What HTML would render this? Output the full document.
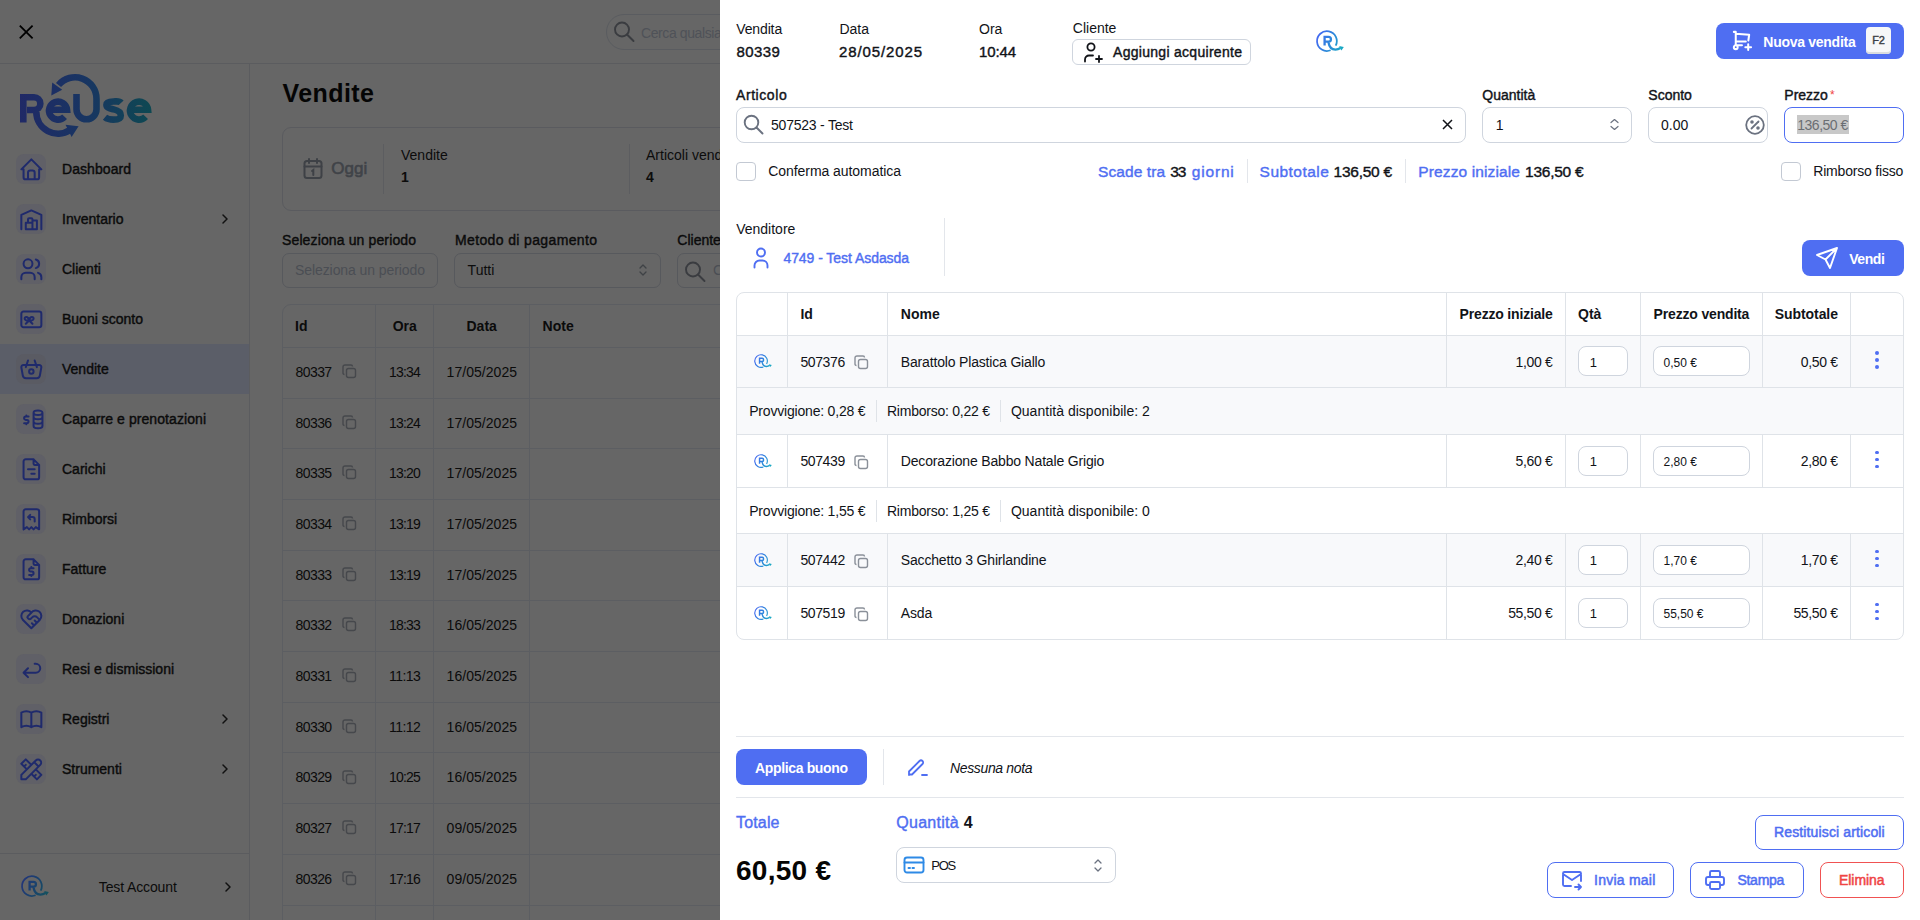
<!DOCTYPE html>
<html><head><meta charset="utf-8"><title>Vendite</title>
<style>
html,body{margin:0;padding:0;}
body{width:1920px;height:920px;overflow:hidden;position:relative;font-family:"Liberation Sans", sans-serif;background:#fff;}
.t{position:absolute;line-height:1;white-space:pre;}
svg{overflow:visible}
</style></head><body>
<div style="position:absolute;left:0px;top:0px;width:720px;height:920px;background:#666666"></div>
<div style="position:absolute;left:0px;top:63px;width:720px;height:1px;background:#5b5c5f"></div>
<div style="position:absolute;left:249px;top:64px;width:1px;height:856px;background:#5b5c5f"></div>
<div style="position:absolute;left:0px;top:853px;width:249px;height:1px;background:#5b5c5f"></div>
<svg style="position:absolute;left:18px;top:24px;" width="16" height="16" viewBox="0 0 16 16" fill="none"><path d="M1.8 1.6L14.6 14.4M14.6 1.6L1.8 14.4" stroke="#000" stroke-width="1.8" stroke-linecap="butt"/></svg>
<div style="position:absolute;left:606px;top:14px;width:200px;height:36px;border:1px solid #5a5c60;border-radius:18px;box-sizing:border-box"></div>
<svg style="position:absolute;left:613px;top:21px;" width="22" height="22" viewBox="0 0 22 22" fill="none"><circle cx="9" cy="8.5" r="7" stroke="#3a3c40" stroke-width="1.9"/><path d="M14 13.5L20.5 20" stroke="#3a3c40" stroke-width="1.9" stroke-linecap="round"/></svg>
<div class="t" style="left:641.00px;top:25.85px;font-size:14px;font-weight:400;color:#4f5258;letter-spacing:-0.400px;">Cerca qualsiasi</div>
<svg style="position:absolute;left:0px;top:0px;" width="250" height="150" viewBox="0 0 250 150" fill="none">
<defs><linearGradient id="lg" gradientUnits="userSpaceOnUse" x1="20" y1="0" x2="151" y2="0"><stop offset="0" stop-color="#202966"/><stop offset="0.5" stop-color="#183562"/><stop offset="1" stop-color="#0e4852"/></linearGradient></defs>
<g stroke="url(#lg)" stroke-width="6.6" fill="none" stroke-linecap="butt">
<path d="M23.3 122.5V97.3H34A6.35 6.35 0 0 1 34 110H27"/>
<path d="M36.3 112A21.7 21.7 0 0 0 70 130"/>
<path d="M76.5 94V109.3A10 10 0 0 0 96.5 109.3V98.7A21.5 21.5 0 0 0 58.5 85"/>
<path d="M48.5 109.7H67A9 9 0 1 0 64.6 116.8"/>
<path d="M121.2 102.8C119.2 100.6 116.3 101.5 113.3 101.5C109.6 101.5 106.4 102 106.4 104.8C106.4 107.8 109.6 108.4 113.6 109.4C118 110.4 120.8 111.8 120.8 115.4C120.8 118.6 117.8 119.6 113.4 119.6C110.2 119.6 107.4 119.2 105 117.2"/>
<path d="M129.5 109.7H148A9 9 0 1 0 145.6 116.8"/>
</g>
<g fill="url(#lg)"><path d="M51.3 95.6L52.2 82.6L62.2 89.8Z"/><path d="M65.5 124.8L78.6 126.2L71.6 137Z"/></g>
</svg>
<div style="position:absolute;left:0px;top:344px;width:249px;height:50px;background:#5b5e68"></div>
<div style="position:absolute;left:16px;top:154px;width:30px;height:30px;background:#606067;border-radius:8px"></div>
<svg style="position:absolute;left:17.65px;top:155.65px;" width="26.7" height="26.7" viewBox="0 0 24 24" fill="none"><path d="M5 12l-2 0l9 -9l9 9l-2 0M5 12v7a2 2 0 0 0 2 2h10a2 2 0 0 0 2 -2v-7M9 21v-6a2 2 0 0 1 2 -2h2a2 2 0 0 1 2 2v6" stroke="#1f2a6c" stroke-width="1.8" stroke-linecap="round" stroke-linejoin="round"/></svg>
<div class="t" style="left:62.00px;top:162.15px;font-size:14px;font-weight:400;-webkit-text-stroke:0.40px #0b0b0b;color:#0b0b0b;letter-spacing:0.062px;">Dashboard</div>
<div style="position:absolute;left:16px;top:204px;width:30px;height:30px;background:#606067;border-radius:8px"></div>
<svg style="position:absolute;left:17.65px;top:205.65px;" width="26.7" height="26.7" viewBox="0 0 24 24" fill="none"><path d="M3 21v-13l9 -4l9 4v13M13 13h4v8h-10v-6h6M13 21v-9a1 1 0 0 0 -1 -1h-2a1 1 0 0 0 -1 1v3" stroke="#1f2a6c" stroke-width="1.8" stroke-linecap="round" stroke-linejoin="round"/></svg>
<div class="t" style="left:62.00px;top:212.15px;font-size:14px;font-weight:400;-webkit-text-stroke:0.40px #0b0b0b;color:#0b0b0b;">Inventario</div>
<svg style="position:absolute;left:221px;top:214px;" width="8" height="10" viewBox="0 0 8 10" fill="none"><path d="M2 1L6 5L2 9" stroke="#111" stroke-width="1.5" stroke-linecap="round" stroke-linejoin="round"/></svg>
<div style="position:absolute;left:16px;top:254px;width:30px;height:30px;background:#606067;border-radius:8px"></div>
<svg style="position:absolute;left:17.65px;top:255.65px;" width="26.7" height="26.7" viewBox="0 0 24 24" fill="none"><path d="M5 7a4 4 0 1 0 8 0a4 4 0 1 0 -8 0M3 21v-2a4 4 0 0 1 4 -4h4a4 4 0 0 1 4 4v2M16 3.13a4 4 0 0 1 0 7.75M21 21v-2a4 4 0 0 0 -3 -3.85" stroke="#1f2a6c" stroke-width="1.8" stroke-linecap="round" stroke-linejoin="round"/></svg>
<div class="t" style="left:62.00px;top:262.15px;font-size:14px;font-weight:400;-webkit-text-stroke:0.40px #0b0b0b;color:#0b0b0b;">Clienti</div>
<div style="position:absolute;left:16px;top:304px;width:30px;height:30px;background:#606067;border-radius:8px"></div>
<svg style="position:absolute;left:17.65px;top:305.65px;" width="26.7" height="26.7" viewBox="0 0 24 24" fill="none"><path d="M3 7a2 2 0 0 1 2 -2h14a2 2 0 0 1 2 2v10a2 2 0 0 1 -2 2h-14a2 2 0 0 1 -2 -2zM7 16l3 -3l3 3M8 13c-.789 0 -2 -.672 -2 -1.5s.711 -1.5 1.5 -1.5c1.128 -.02 2.077 1.17 2.5 3c.423 -1.83 1.372 -3.02 2.5 -3c.789 0 1.5 .672 1.5 1.5s-1.211 1.5 -2 1.5h-4z" stroke="#1f2a6c" stroke-width="1.8" stroke-linecap="round" stroke-linejoin="round"/></svg>
<div class="t" style="left:62.00px;top:312.15px;font-size:14px;font-weight:400;-webkit-text-stroke:0.40px #0b0b0b;color:#0b0b0b;">Buoni sconto</div>
<div style="position:absolute;left:16px;top:354px;width:30px;height:30px;background:#5a5b63;border-radius:8px"></div>
<svg style="position:absolute;left:17.65px;top:355.65px;" width="26.7" height="26.7" viewBox="0 0 24 24" fill="none"><path d="M10 14a2 2 0 1 0 4 0a2 2 0 0 0 -4 0M5.001 8h13.999a2 2 0 0 1 1.977 2.304l-1.255 7.152a3 3 0 0 1 -2.966 2.544h-9.512a3 3 0 0 1 -2.965 -2.544l-1.255 -7.152a2 2 0 0 1 1.977 -2.304zM17 10l-2 -6M7 10l2 -6" stroke="#1f2a6c" stroke-width="1.8" stroke-linecap="round" stroke-linejoin="round"/></svg>
<div class="t" style="left:62.00px;top:362.15px;font-size:14px;font-weight:400;-webkit-text-stroke:0.40px #0b0b0b;color:#0b0b0b;">Vendite</div>
<div style="position:absolute;left:16px;top:404px;width:30px;height:30px;background:#606067;border-radius:8px"></div>
<svg style="position:absolute;left:17.65px;top:405.65px;" width="26.7" height="26.7" viewBox="0 0 24 24" fill="none"><path d="M14 6c0 1.1 1.8 2 4 2s4 -.9 4 -2s-1.8 -2 -4 -2s-4 .9 -4 2M14 6v12c0 1.1 1.8 2 4 2s4 -.9 4 -2v-12M14 10c0 1.1 1.8 2 4 2s4 -.9 4 -2M14 14c0 1.1 1.8 2 4 2s4 -.9 4 -2M9.5 9.5h-2.5a1.5 1.5 0 0 0 0 3h1a1.5 1.5 0 0 1 0 3h-2.5M7.5 8.5v1m0 6v1" stroke="#1f2a6c" stroke-width="1.8" stroke-linecap="round" stroke-linejoin="round"/></svg>
<div class="t" style="left:62.00px;top:412.15px;font-size:14px;font-weight:400;-webkit-text-stroke:0.40px #0b0b0b;color:#0b0b0b;letter-spacing:0.075px;">Caparre e prenotazioni</div>
<div style="position:absolute;left:16px;top:454px;width:30px;height:30px;background:#606067;border-radius:8px"></div>
<svg style="position:absolute;left:17.65px;top:455.65px;" width="26.7" height="26.7" viewBox="0 0 24 24" fill="none"><path d="M14 3v4a1 1 0 0 0 1 1h4M17 21h-10a2 2 0 0 1 -2 -2v-14a2 2 0 0 1 2 -2h7l5 5v11a2 2 0 0 1 -2 2zM9 12h6M12 16h3" stroke="#1f2a6c" stroke-width="1.8" stroke-linecap="round" stroke-linejoin="round"/></svg>
<div class="t" style="left:62.00px;top:462.15px;font-size:14px;font-weight:400;-webkit-text-stroke:0.40px #0b0b0b;color:#0b0b0b;">Carichi</div>
<div style="position:absolute;left:16px;top:504px;width:30px;height:30px;background:#606067;border-radius:8px"></div>
<svg style="position:absolute;left:17.65px;top:505.65px;" width="26.7" height="26.7" viewBox="0 0 24 24" fill="none"><path d="M5 21v-16a2 2 0 0 1 2 -2h10a2 2 0 0 1 2 2v16l-3 -2l-2 2l-2 -2l-2 2l-2 -2l-3 2M15 14v-2a2 2 0 0 0 -2 -2h-4l2 -2m0 4l-2 -2" stroke="#1f2a6c" stroke-width="1.8" stroke-linecap="round" stroke-linejoin="round"/></svg>
<div class="t" style="left:62.00px;top:512.15px;font-size:14px;font-weight:400;-webkit-text-stroke:0.40px #0b0b0b;color:#0b0b0b;">Rimborsi</div>
<div style="position:absolute;left:16px;top:554px;width:30px;height:30px;background:#606067;border-radius:8px"></div>
<svg style="position:absolute;left:17.65px;top:555.65px;" width="26.7" height="26.7" viewBox="0 0 24 24" fill="none"><path d="M14 3v4a1 1 0 0 0 1 1h4M17 21h-10a2 2 0 0 1 -2 -2v-14a2 2 0 0 1 2 -2h7l5 5v11a2 2 0 0 1 -2 2zM14 11h-2.5a1.5 1.5 0 0 0 0 3h1a1.5 1.5 0 0 1 0 3h-2.5M12 17v1m0 -8v1" stroke="#1f2a6c" stroke-width="1.8" stroke-linecap="round" stroke-linejoin="round"/></svg>
<div class="t" style="left:62.00px;top:562.15px;font-size:14px;font-weight:400;-webkit-text-stroke:0.40px #0b0b0b;color:#0b0b0b;">Fatture</div>
<div style="position:absolute;left:16px;top:604px;width:30px;height:30px;background:#606067;border-radius:8px"></div>
<svg style="position:absolute;left:17.65px;top:605.65px;" width="26.7" height="26.7" viewBox="0 0 24 24" fill="none"><path d="M19.5 12.572l-7.5 7.428l-7.5 -7.428a5 5 0 1 1 7.5 -6.566a5 5 0 1 1 7.5 6.572M12 6l-3.293 3.293a1 1 0 0 0 0 1.414l.543 .543c.69 .69 1.81 .69 2.5 0l1 -1a3.182 3.182 0 0 1 4.5 0l2.25 2.25M12.5 15.5l2 2M15 13l2 2" stroke="#1f2a6c" stroke-width="1.8" stroke-linecap="round" stroke-linejoin="round"/></svg>
<div class="t" style="left:62.00px;top:612.15px;font-size:14px;font-weight:400;-webkit-text-stroke:0.40px #0b0b0b;color:#0b0b0b;">Donazioni</div>
<div style="position:absolute;left:16px;top:654px;width:30px;height:30px;background:#606067;border-radius:8px"></div>
<svg style="position:absolute;left:17.65px;top:655.65px;" width="26.7" height="26.7" viewBox="0 0 24 24" fill="none"><path d="M9 11l-4 4l4 4m-4 -4h11a4 4 0 0 0 0 -8h-1" stroke="#1f2a6c" stroke-width="1.8" stroke-linecap="round" stroke-linejoin="round"/></svg>
<div class="t" style="left:62.00px;top:662.15px;font-size:14px;font-weight:400;-webkit-text-stroke:0.40px #0b0b0b;color:#0b0b0b;">Resi e dismissioni</div>
<div style="position:absolute;left:16px;top:704px;width:30px;height:30px;background:#606067;border-radius:8px"></div>
<svg style="position:absolute;left:17.65px;top:705.65px;" width="26.7" height="26.7" viewBox="0 0 24 24" fill="none"><path d="M3 19a9 9 0 0 1 9 0a9 9 0 0 1 9 0M3 6a9 9 0 0 1 9 0a9 9 0 0 1 9 0M3 6l0 13M12 6l0 13M21 6l0 13" stroke="#1f2a6c" stroke-width="1.8" stroke-linecap="round" stroke-linejoin="round"/></svg>
<div class="t" style="left:62.00px;top:712.15px;font-size:14px;font-weight:400;-webkit-text-stroke:0.40px #0b0b0b;color:#0b0b0b;">Registri</div>
<svg style="position:absolute;left:221px;top:714px;" width="8" height="10" viewBox="0 0 8 10" fill="none"><path d="M2 1L6 5L2 9" stroke="#111" stroke-width="1.5" stroke-linecap="round" stroke-linejoin="round"/></svg>
<div style="position:absolute;left:16px;top:754px;width:30px;height:30px;background:#606067;border-radius:8px"></div>
<svg style="position:absolute;left:17.65px;top:755.65px;" width="26.7" height="26.7" viewBox="0 0 24 24" fill="none"><path d="M3 21h4l13 -13a1.5 1.5 0 0 0 -4 -4l-13 13v4M14.5 5.5l4 4M12 8l-5 -5l-4 4l5 5M7 8l-1.5 1.5M16 12l5 5l-4 4l-5 -5M16 17l-1.5 1.5" stroke="#1f2a6c" stroke-width="1.8" stroke-linecap="round" stroke-linejoin="round"/></svg>
<div class="t" style="left:62.00px;top:762.15px;font-size:14px;font-weight:400;-webkit-text-stroke:0.40px #0b0b0b;color:#0b0b0b;">Strumenti</div>
<svg style="position:absolute;left:221px;top:764px;" width="8" height="10" viewBox="0 0 8 10" fill="none"><path d="M2 1L6 5L2 9" stroke="#111" stroke-width="1.5" stroke-linecap="round" stroke-linejoin="round"/></svg>
<svg style="position:absolute;left:21px;top:875px;" width="28" height="22" viewBox="0 0 28 22" fill="none"><defs><linearGradient id="rg22357a" gradientUnits="userSpaceOnUse" x1="1" y1="5" x2="27" y2="18"><stop offset="0" stop-color="#22357a"/><stop offset="1" stop-color="#13505f"/></linearGradient></defs>
<g stroke="url(#rg22357a)" fill="none" stroke-linecap="butt"><path stroke-width="1.75" d="M19.7 15.7A9.9 9.9 0 1 0 14.6 20.3"/>
<path stroke-width="2.3" d="M8.6 15.5V6.8H12.5A2.45 2.45 0 0 1 12.5 11.7H8.6M12.4 12C13.3 17.5 16 19.6 19.5 19.6C21.5 19.6 23 19 24.5 18"/></g><path d="M23.2 16.1L27.8 17.1L25.4 20.6Z" fill="#13505f"/></svg>
<div class="t" style="left:98.80px;top:879.85px;font-size:14px;font-weight:400;color:#0b0b0b;letter-spacing:-0.126px;">Test Account</div>
<svg style="position:absolute;left:224px;top:882px;" width="8" height="10" viewBox="0 0 8 10" fill="none"><path d="M2 1L6 5L2 9" stroke="#111" stroke-width="1.5" stroke-linecap="round" stroke-linejoin="round"/></svg>
<div class="t" style="left:282.60px;top:80.54px;font-size:25px;font-weight:700;color:#050505;letter-spacing:0.413px;">Vendite</div>
<div style="position:absolute;left:282px;top:127px;width:460px;height:84px;border:1px solid #5a5b5f;border-radius:9px;box-sizing:border-box"></div>
<svg style="position:absolute;left:303px;top:158px;" width="20" height="22" viewBox="0 0 20 22" fill="none"><g stroke="#3e4146" stroke-width="2" stroke-linecap="round"><rect x="1.5" y="3" width="17" height="17" rx="2.5"/><path d="M1.5 8.5H18.5M6 1V5M14 1V5M9 13L10.3 12V17"/></g></svg>
<div class="t" style="left:331.30px;top:159.61px;font-size:17px;font-weight:400;-webkit-text-stroke:0.40px #404348;color:#404348;letter-spacing:0.026px;-webkit-text-stroke:0.6px #404348;">Oggi</div>
<div style="position:absolute;left:383px;top:144px;width:1px;height:50px;background:#5c5d60"></div>
<div class="t" style="left:401.00px;top:148.15px;font-size:14px;font-weight:400;color:#0c0c0c;">Vendite</div>
<div class="t" style="left:401.00px;top:169.85px;font-size:14px;font-weight:700;color:#0c0c0c;">1</div>
<div style="position:absolute;left:629px;top:144px;width:1px;height:50px;background:#5c5d60"></div>
<div class="t" style="left:646.00px;top:148.15px;font-size:14px;font-weight:400;color:#0c0c0c;">Articoli venduti</div>
<div class="t" style="left:646.00px;top:169.85px;font-size:14px;font-weight:700;color:#0c0c0c;">4</div>
<div class="t" style="left:282.00px;top:232.85px;font-size:14px;font-weight:400;-webkit-text-stroke:0.40px #0b0b0b;color:#0b0b0b;letter-spacing:0.129px;">Seleziona un periodo</div>
<div class="t" style="left:455.00px;top:232.85px;font-size:14px;font-weight:400;-webkit-text-stroke:0.40px #0b0b0b;color:#0b0b0b;letter-spacing:0.365px;">Metodo di pagamento</div>
<div class="t" style="left:677.30px;top:232.85px;font-size:14px;font-weight:400;-webkit-text-stroke:0.40px #0b0b0b;color:#0b0b0b;">Cliente</div>
<div style="position:absolute;left:282px;top:253px;width:156px;height:35px;border:1px solid #57595d;border-radius:7px;box-sizing:border-box"></div>
<div class="t" style="left:295.00px;top:263.15px;font-size:14px;font-weight:400;color:#4b4e54;letter-spacing:-0.081px;">Seleziona un periodo</div>
<div style="position:absolute;left:454px;top:253px;width:207px;height:35px;border:1px solid #57595d;border-radius:7px;box-sizing:border-box"></div>
<div class="t" style="left:467.60px;top:263.15px;font-size:14px;font-weight:400;color:#0c0c0c;">Tutti</div>
<svg style="position:absolute;left:638px;top:263px;" width="10" height="14" viewBox="0 0 10 14" fill="none"><path d="M2 5L5 2L8 5M2 9L5 12L8 9" stroke="#3f4246" stroke-width="1.3" stroke-linecap="round" stroke-linejoin="round"/></svg>
<div style="position:absolute;left:677px;top:253px;width:80px;height:35px;border:1px solid #57595d;border-radius:7px;box-sizing:border-box"></div>
<svg style="position:absolute;left:684px;top:261px;" width="22" height="22" viewBox="0 0 22 22" fill="none"><circle cx="9" cy="8.5" r="7" stroke="#3a3c40" stroke-width="1.9"/><path d="M14 13.5L20.5 20" stroke="#3a3c40" stroke-width="1.9" stroke-linecap="round"/></svg>
<div class="t" style="left:713.00px;top:263.15px;font-size:14px;font-weight:400;color:#4b4e54;">Cerca</div>
<div style="position:absolute;left:282px;top:304px;width:460px;height:630px;border:1px solid #5c5e62;border-radius:9px;box-sizing:border-box"></div>
<div style="position:absolute;left:282px;top:347px;width:440px;height:1px;background:#5c5e62"></div>
<div style="position:absolute;left:375px;top:304px;width:1px;height:616px;background:#5c5e62"></div>
<div style="position:absolute;left:433px;top:304px;width:1px;height:616px;background:#5c5e62"></div>
<div style="position:absolute;left:529px;top:304px;width:1px;height:616px;background:#5c5e62"></div>
<div class="t" style="left:295.00px;top:318.85px;font-size:14px;font-weight:700;color:#0b0b0b;">Id</div>
<div class="t" style="left:392.70px;top:318.85px;font-size:14px;font-weight:700;color:#0b0b0b;">Ora</div>
<div class="t" style="left:466.50px;top:318.85px;font-size:14px;font-weight:700;color:#0b0b0b;">Data</div>
<div class="t" style="left:542.60px;top:318.85px;font-size:14px;font-weight:700;color:#0b0b0b;">Note</div>
<div style="position:absolute;left:282px;top:398px;width:440px;height:1px;background:#5c5e62"></div>
<div class="t" style="left:295.60px;top:364.85px;font-size:14px;font-weight:400;color:#0b0b0b;letter-spacing:-0.609px;">80337</div>
<svg style="position:absolute;left:342px;top:363.9px;" width="15" height="15" viewBox="0 0 15 15" fill="none"><g stroke="#46484c" stroke-width="1.4" fill="none"><rect x="4.5" y="4.5" width="9" height="9" rx="2"/><path d="M2.5 10.5C1.5 10.5 1 10 1 9V3C1 1.8 1.8 1 3 1H9C10 1 10.5 1.5 10.5 2.5"/></g></svg>
<div class="t" style="left:389.00px;top:364.85px;font-size:14px;font-weight:400;color:#0b0b0b;letter-spacing:-0.812px;">13:34</div>
<div class="t" style="left:446.60px;top:364.85px;font-size:14px;font-weight:400;color:#0b0b0b;letter-spacing:0.036px;">17/05/2025</div>
<div style="position:absolute;left:282px;top:448px;width:440px;height:1px;background:#5c5e62"></div>
<div class="t" style="left:295.60px;top:415.55px;font-size:14px;font-weight:400;color:#0b0b0b;letter-spacing:-0.609px;">80336</div>
<svg style="position:absolute;left:342px;top:414.59999999999997px;" width="15" height="15" viewBox="0 0 15 15" fill="none"><g stroke="#46484c" stroke-width="1.4" fill="none"><rect x="4.5" y="4.5" width="9" height="9" rx="2"/><path d="M2.5 10.5C1.5 10.5 1 10 1 9V3C1 1.8 1.8 1 3 1H9C10 1 10.5 1.5 10.5 2.5"/></g></svg>
<div class="t" style="left:389.00px;top:415.55px;font-size:14px;font-weight:400;color:#0b0b0b;letter-spacing:-0.812px;">13:24</div>
<div class="t" style="left:446.60px;top:415.55px;font-size:14px;font-weight:400;color:#0b0b0b;letter-spacing:0.036px;">17/05/2025</div>
<div style="position:absolute;left:282px;top:499px;width:440px;height:1px;background:#5c5e62"></div>
<div class="t" style="left:295.60px;top:466.25px;font-size:14px;font-weight:400;color:#0b0b0b;letter-spacing:-0.609px;">80335</div>
<svg style="position:absolute;left:342px;top:465.29999999999995px;" width="15" height="15" viewBox="0 0 15 15" fill="none"><g stroke="#46484c" stroke-width="1.4" fill="none"><rect x="4.5" y="4.5" width="9" height="9" rx="2"/><path d="M2.5 10.5C1.5 10.5 1 10 1 9V3C1 1.8 1.8 1 3 1H9C10 1 10.5 1.5 10.5 2.5"/></g></svg>
<div class="t" style="left:389.00px;top:466.25px;font-size:14px;font-weight:400;color:#0b0b0b;letter-spacing:-0.812px;">13:20</div>
<div class="t" style="left:446.60px;top:466.25px;font-size:14px;font-weight:400;color:#0b0b0b;letter-spacing:0.036px;">17/05/2025</div>
<div style="position:absolute;left:282px;top:550px;width:440px;height:1px;background:#5c5e62"></div>
<div class="t" style="left:295.60px;top:516.95px;font-size:14px;font-weight:400;color:#0b0b0b;letter-spacing:-0.609px;">80334</div>
<svg style="position:absolute;left:342px;top:516.0px;" width="15" height="15" viewBox="0 0 15 15" fill="none"><g stroke="#46484c" stroke-width="1.4" fill="none"><rect x="4.5" y="4.5" width="9" height="9" rx="2"/><path d="M2.5 10.5C1.5 10.5 1 10 1 9V3C1 1.8 1.8 1 3 1H9C10 1 10.5 1.5 10.5 2.5"/></g></svg>
<div class="t" style="left:389.00px;top:516.95px;font-size:14px;font-weight:400;color:#0b0b0b;letter-spacing:-0.812px;">13:19</div>
<div class="t" style="left:446.60px;top:516.95px;font-size:14px;font-weight:400;color:#0b0b0b;letter-spacing:0.036px;">17/05/2025</div>
<div style="position:absolute;left:282px;top:600px;width:440px;height:1px;background:#5c5e62"></div>
<div class="t" style="left:295.60px;top:567.65px;font-size:14px;font-weight:400;color:#0b0b0b;letter-spacing:-0.609px;">80333</div>
<svg style="position:absolute;left:342px;top:566.7px;" width="15" height="15" viewBox="0 0 15 15" fill="none"><g stroke="#46484c" stroke-width="1.4" fill="none"><rect x="4.5" y="4.5" width="9" height="9" rx="2"/><path d="M2.5 10.5C1.5 10.5 1 10 1 9V3C1 1.8 1.8 1 3 1H9C10 1 10.5 1.5 10.5 2.5"/></g></svg>
<div class="t" style="left:389.00px;top:567.65px;font-size:14px;font-weight:400;color:#0b0b0b;letter-spacing:-0.812px;">13:19</div>
<div class="t" style="left:446.60px;top:567.65px;font-size:14px;font-weight:400;color:#0b0b0b;letter-spacing:0.036px;">17/05/2025</div>
<div style="position:absolute;left:282px;top:651px;width:440px;height:1px;background:#5c5e62"></div>
<div class="t" style="left:295.60px;top:618.35px;font-size:14px;font-weight:400;color:#0b0b0b;letter-spacing:-0.609px;">80332</div>
<svg style="position:absolute;left:342px;top:617.4px;" width="15" height="15" viewBox="0 0 15 15" fill="none"><g stroke="#46484c" stroke-width="1.4" fill="none"><rect x="4.5" y="4.5" width="9" height="9" rx="2"/><path d="M2.5 10.5C1.5 10.5 1 10 1 9V3C1 1.8 1.8 1 3 1H9C10 1 10.5 1.5 10.5 2.5"/></g></svg>
<div class="t" style="left:389.00px;top:618.35px;font-size:14px;font-weight:400;color:#0b0b0b;letter-spacing:-0.812px;">18:33</div>
<div class="t" style="left:446.60px;top:618.35px;font-size:14px;font-weight:400;color:#0b0b0b;letter-spacing:0.036px;">16/05/2025</div>
<div style="position:absolute;left:282px;top:702px;width:440px;height:1px;background:#5c5e62"></div>
<div class="t" style="left:295.60px;top:669.05px;font-size:14px;font-weight:400;color:#0b0b0b;letter-spacing:-0.609px;">80331</div>
<svg style="position:absolute;left:342px;top:668.1px;" width="15" height="15" viewBox="0 0 15 15" fill="none"><g stroke="#46484c" stroke-width="1.4" fill="none"><rect x="4.5" y="4.5" width="9" height="9" rx="2"/><path d="M2.5 10.5C1.5 10.5 1 10 1 9V3C1 1.8 1.8 1 3 1H9C10 1 10.5 1.5 10.5 2.5"/></g></svg>
<div class="t" style="left:389.00px;top:669.05px;font-size:14px;font-weight:400;color:#0b0b0b;letter-spacing:-0.550px;">11:13</div>
<div class="t" style="left:446.60px;top:669.05px;font-size:14px;font-weight:400;color:#0b0b0b;letter-spacing:0.036px;">16/05/2025</div>
<div style="position:absolute;left:282px;top:752px;width:440px;height:1px;background:#5c5e62"></div>
<div class="t" style="left:295.60px;top:719.75px;font-size:14px;font-weight:400;color:#0b0b0b;letter-spacing:-0.609px;">80330</div>
<svg style="position:absolute;left:342px;top:718.8px;" width="15" height="15" viewBox="0 0 15 15" fill="none"><g stroke="#46484c" stroke-width="1.4" fill="none"><rect x="4.5" y="4.5" width="9" height="9" rx="2"/><path d="M2.5 10.5C1.5 10.5 1 10 1 9V3C1 1.8 1.8 1 3 1H9C10 1 10.5 1.5 10.5 2.5"/></g></svg>
<div class="t" style="left:389.00px;top:719.75px;font-size:14px;font-weight:400;color:#0b0b0b;letter-spacing:-0.550px;">11:12</div>
<div class="t" style="left:446.60px;top:719.75px;font-size:14px;font-weight:400;color:#0b0b0b;letter-spacing:0.036px;">16/05/2025</div>
<div style="position:absolute;left:282px;top:803px;width:440px;height:1px;background:#5c5e62"></div>
<div class="t" style="left:295.60px;top:770.45px;font-size:14px;font-weight:400;color:#0b0b0b;letter-spacing:-0.609px;">80329</div>
<svg style="position:absolute;left:342px;top:769.5px;" width="15" height="15" viewBox="0 0 15 15" fill="none"><g stroke="#46484c" stroke-width="1.4" fill="none"><rect x="4.5" y="4.5" width="9" height="9" rx="2"/><path d="M2.5 10.5C1.5 10.5 1 10 1 9V3C1 1.8 1.8 1 3 1H9C10 1 10.5 1.5 10.5 2.5"/></g></svg>
<div class="t" style="left:389.00px;top:770.45px;font-size:14px;font-weight:400;color:#0b0b0b;letter-spacing:-0.812px;">10:25</div>
<div class="t" style="left:446.60px;top:770.45px;font-size:14px;font-weight:400;color:#0b0b0b;letter-spacing:0.036px;">16/05/2025</div>
<div style="position:absolute;left:282px;top:854px;width:440px;height:1px;background:#5c5e62"></div>
<div class="t" style="left:295.60px;top:821.15px;font-size:14px;font-weight:400;color:#0b0b0b;letter-spacing:-0.609px;">80327</div>
<svg style="position:absolute;left:342px;top:820.2px;" width="15" height="15" viewBox="0 0 15 15" fill="none"><g stroke="#46484c" stroke-width="1.4" fill="none"><rect x="4.5" y="4.5" width="9" height="9" rx="2"/><path d="M2.5 10.5C1.5 10.5 1 10 1 9V3C1 1.8 1.8 1 3 1H9C10 1 10.5 1.5 10.5 2.5"/></g></svg>
<div class="t" style="left:389.00px;top:821.15px;font-size:14px;font-weight:400;color:#0b0b0b;letter-spacing:-0.812px;">17:17</div>
<div class="t" style="left:446.60px;top:821.15px;font-size:14px;font-weight:400;color:#0b0b0b;letter-spacing:0.036px;">09/05/2025</div>
<div style="position:absolute;left:282px;top:905px;width:440px;height:1px;background:#5c5e62"></div>
<div class="t" style="left:295.60px;top:871.85px;font-size:14px;font-weight:400;color:#0b0b0b;letter-spacing:-0.609px;">80326</div>
<svg style="position:absolute;left:342px;top:870.9px;" width="15" height="15" viewBox="0 0 15 15" fill="none"><g stroke="#46484c" stroke-width="1.4" fill="none"><rect x="4.5" y="4.5" width="9" height="9" rx="2"/><path d="M2.5 10.5C1.5 10.5 1 10 1 9V3C1 1.8 1.8 1 3 1H9C10 1 10.5 1.5 10.5 2.5"/></g></svg>
<div class="t" style="left:389.00px;top:871.85px;font-size:14px;font-weight:400;color:#0b0b0b;letter-spacing:-0.812px;">17:16</div>
<div class="t" style="left:446.60px;top:871.85px;font-size:14px;font-weight:400;color:#0b0b0b;letter-spacing:0.036px;">09/05/2025</div>
<div style="position:absolute;left:720px;top:0px;width:1200px;height:920px;background:#fff"></div>
<div class="t" style="left:736.20px;top:22.25px;font-size:14px;font-weight:400;color:#111318;letter-spacing:-0.120px;">Vendita</div>
<div class="t" style="left:736.50px;top:43.90px;font-size:15px;font-weight:400;-webkit-text-stroke:0.40px #111318;color:#111318;letter-spacing:0.420px;">80339</div>
<div class="t" style="left:839.40px;top:21.90px;font-size:14px;font-weight:400;color:#111318;">Data</div>
<div class="t" style="left:839.00px;top:44.20px;font-size:15px;font-weight:400;-webkit-text-stroke:0.40px #111318;color:#111318;letter-spacing:0.880px;">28/05/2025</div>
<div class="t" style="left:979.00px;top:21.90px;font-size:14px;font-weight:400;color:#111318;">Ora</div>
<div class="t" style="left:979.00px;top:44.20px;font-size:15px;font-weight:400;-webkit-text-stroke:0.40px #111318;color:#111318;letter-spacing:-0.137px;">10:44</div>
<div class="t" style="left:1072.80px;top:21.25px;font-size:14px;font-weight:400;color:#111318;">Cliente</div>
<div style="position:absolute;left:1072px;top:39px;width:179px;height:26px;border:1px solid #cfd5de;border-radius:6px;box-sizing:border-box"></div>
<svg style="position:absolute;left:1082px;top:42px;" width="22" height="22" viewBox="0 0 22 22" fill="none"><g stroke="#111318" stroke-width="1.8" stroke-linecap="round"><circle cx="9" cy="5" r="3.6"/><path d="M3 19.5V17.5A4 4 0 0 1 7 13.5H11M14 17H20M17 14V20"/></g></svg>
<div class="t" style="left:1113.00px;top:45.05px;font-size:14px;font-weight:400;-webkit-text-stroke:0.40px #111318;color:#111318;letter-spacing:0.291px;">Aggiungi acquirente</div>
<svg style="position:absolute;left:1316px;top:30px;" width="28" height="22" viewBox="0 0 28 22" fill="none"><defs><linearGradient id="rg4466f2" gradientUnits="userSpaceOnUse" x1="1" y1="5" x2="27" y2="18"><stop offset="0" stop-color="#4466f2"/><stop offset="1" stop-color="#18a8c4"/></linearGradient></defs>
<g stroke="url(#rg4466f2)" fill="none" stroke-linecap="butt"><path stroke-width="1.75" d="M19.7 15.7A9.9 9.9 0 1 0 14.6 20.3"/>
<path stroke-width="2.3" d="M8.6 15.5V6.8H12.5A2.45 2.45 0 0 1 12.5 11.7H8.6M12.4 12C13.3 17.5 16 19.6 19.5 19.6C21.5 19.6 23 19 24.5 18"/></g><path d="M23.2 16.1L27.8 17.1L25.4 20.6Z" fill="#18a8c4"/></svg>
<div style="position:absolute;left:1716px;top:23px;width:188px;height:36px;background:#4f6ef2;border-radius:8px"></div>
<svg style="position:absolute;left:1729.5px;top:29px;" width="23" height="23" viewBox="0 0 24 24" fill="none"><g stroke="#fff" stroke-width="2.1" stroke-linecap="round" stroke-linejoin="round"><path d="M4 19a2 2 0 1 0 4 0a2 2 0 0 0 -4 0M12.5 17h-6.5v-14h-2M6 5l14 1l-.86 6.017m-2.64 .983h-10.5M16 19h6M19 16v6"/></g></svg>
<div class="t" style="left:1763.30px;top:34.85px;font-size:14px;font-weight:700;color:#fff;letter-spacing:-0.275px;">Nuova vendita</div>
<div style="position:absolute;left:1866px;top:27px;width:25px;height:27px;background:#f6f7f8;border-radius:4px;box-shadow:inset 0 -2px 0 #d9dcdf"></div>
<div class="t" style="left:1872.30px;top:34.69px;font-size:11px;font-weight:400;-webkit-text-stroke:0.40px #3b3e44;color:#3b3e44;letter-spacing:-0.244px;">F2</div>
<div class="t" style="left:736.00px;top:88.15px;font-size:14px;font-weight:400;-webkit-text-stroke:0.40px #111318;color:#111318;letter-spacing:0.573px;">Articolo</div>
<div class="t" style="left:1482.30px;top:88.15px;font-size:14px;font-weight:400;-webkit-text-stroke:0.40px #111318;color:#111318;">Quantità</div>
<div class="t" style="left:1648.30px;top:88.15px;font-size:14px;font-weight:400;-webkit-text-stroke:0.40px #111318;color:#111318;">Sconto</div>
<div class="t" style="left:1784.30px;top:88.15px;font-size:14px;font-weight:400;-webkit-text-stroke:0.40px #111318;color:#111318;">Prezzo</div>
<div class="t" style="left:1830.00px;top:88.74px;font-size:12px;font-weight:400;color:#ef4444;">*</div>
<div style="position:absolute;left:736px;top:107px;width:730px;height:36px;border:1px solid #cfd5de;border-radius:8px;box-sizing:border-box"></div>
<svg style="position:absolute;left:743px;top:114px;" width="22" height="22" viewBox="0 0 22 22" fill="none"><circle cx="8.5" cy="8.5" r="6.8" stroke="#6b7280" stroke-width="1.9"/><path d="M13.5 13.5L19.5 19.5" stroke="#6b7280" stroke-width="1.9" stroke-linecap="round"/></svg>
<div class="t" style="left:771.00px;top:117.95px;font-size:14px;font-weight:400;color:#111318;letter-spacing:-0.216px;">507523 - Test</div>
<svg style="position:absolute;left:1442px;top:119px;" width="11" height="11" viewBox="0 0 11 11" fill="none"><path d="M1 1L10 10M10 1L1 10" stroke="#111318" stroke-width="1.5"/></svg>
<div style="position:absolute;left:1482px;top:107px;width:150px;height:36px;border:1px solid #cfd5de;border-radius:8px;box-sizing:border-box"></div>
<div class="t" style="left:1495.70px;top:117.95px;font-size:14px;font-weight:400;color:#111318;">1</div>
<svg style="position:absolute;left:1608.5px;top:118.3px;" width="11" height="13" viewBox="0 0 11 13" fill="none"><path d="M2 4.5L5.5 1.5L9 4.5M2 8.5L5.5 11.5L9 8.5" stroke="#6b7280" stroke-width="1.2" stroke-linecap="round" stroke-linejoin="round"/></svg>
<div style="position:absolute;left:1648px;top:107px;width:120px;height:36px;border:1px solid #cfd5de;border-radius:8px;box-sizing:border-box"></div>
<div class="t" style="left:1661.00px;top:117.95px;font-size:14px;font-weight:400;color:#111318;">0.00</div>
<svg style="position:absolute;left:1745px;top:115px;" width="20" height="20" viewBox="0 0 20 20" fill="none"><g stroke="#6b7280" stroke-width="1.8" stroke-linecap="round"><circle cx="10" cy="10" r="8.8"/><path d="M6.5 13.5L13.5 6.5"/><circle cx="7" cy="7" r="0.9"/><circle cx="13" cy="13" r="0.9"/></g></svg>
<div style="position:absolute;left:1784px;top:107px;width:120px;height:36px;border:1.6px solid #4f6ef2;border-radius:8px;box-sizing:border-box"></div>
<div style="position:absolute;left:1797px;top:115px;width:52px;height:19px;background:#c8c8c8"></div>
<div class="t" style="left:1797.30px;top:117.95px;font-size:14px;font-weight:400;color:#6b6e73;letter-spacing:-0.500px;">136,50 €</div>
<div style="position:absolute;left:736px;top:162px;width:20px;height:19px;border:1px solid #c3c9d3;border-radius:4px;box-sizing:border-box;background:#fff"></div>
<div class="t" style="left:768.30px;top:163.95px;font-size:14px;font-weight:400;color:#111318;letter-spacing:-0.064px;">Conferma automatica</div>
<div class="t" style="left:1098.10px;top:163.88px;font-size:15.5px;font-weight:400;-webkit-text-stroke:0.40px #4f6ef2;color:#4f6ef2;letter-spacing:0.080px;">Scade tra</div>
<div class="t" style="left:1170.30px;top:163.88px;font-size:15.5px;font-weight:400;-webkit-text-stroke:0.40px #111318;color:#111318;letter-spacing:-1.150px;">33</div>
<div class="t" style="left:1191.80px;top:163.88px;font-size:15.5px;font-weight:400;-webkit-text-stroke:0.40px #4f6ef2;color:#4f6ef2;letter-spacing:0.816px;">giorni</div>
<div style="position:absolute;left:1247px;top:159px;width:1px;height:24px;background:#e3e6eb"></div>
<div class="t" style="left:1259.60px;top:163.88px;font-size:15.5px;font-weight:400;-webkit-text-stroke:0.40px #4f6ef2;color:#4f6ef2;letter-spacing:0.463px;">Subtotale</div>
<div class="t" style="left:1333.60px;top:163.88px;font-size:15.5px;font-weight:400;-webkit-text-stroke:0.40px #111318;color:#111318;letter-spacing:-0.263px;">136,50 €</div>
<div style="position:absolute;left:1405px;top:159px;width:1px;height:24px;background:#e3e6eb"></div>
<div class="t" style="left:1418.30px;top:163.88px;font-size:15.5px;font-weight:400;-webkit-text-stroke:0.40px #4f6ef2;color:#4f6ef2;letter-spacing:0.126px;">Prezzo iniziale</div>
<div class="t" style="left:1525.00px;top:163.88px;font-size:15.5px;font-weight:400;-webkit-text-stroke:0.40px #111318;color:#111318;letter-spacing:-0.235px;">136,50 €</div>
<div style="position:absolute;left:1781px;top:162px;width:20px;height:19px;border:1px solid #c3c9d3;border-radius:4px;box-sizing:border-box;background:#fff"></div>
<div class="t" style="left:1813.30px;top:163.95px;font-size:14px;font-weight:400;color:#111318;letter-spacing:-0.200px;">Rimborso fisso</div>
<div class="t" style="left:736.20px;top:222.05px;font-size:14px;font-weight:400;color:#111318;">Venditore</div>
<svg style="position:absolute;left:753px;top:247px;" width="16" height="22" viewBox="0 0 16 22" fill="none"><g stroke="#4f6ef2" stroke-width="1.9" stroke-linecap="round"><circle cx="8" cy="5.5" r="4"/><path d="M1.5 20.5V18.5A5 5 0 0 1 6.5 13.5H9.5A5 5 0 0 1 14.5 18.5V20.5"/></g></svg>
<div class="t" style="left:783.40px;top:250.75px;font-size:14px;font-weight:400;-webkit-text-stroke:0.40px #4f6ef2;color:#4f6ef2;letter-spacing:-0.051px;">4749 - Test Asdasda</div>
<div style="position:absolute;left:944px;top:218px;width:1px;height:58px;background:#e3e6eb"></div>
<div style="position:absolute;left:1802px;top:240px;width:102px;height:36px;background:#4f6ef2;border-radius:8px"></div>
<svg style="position:absolute;left:1815px;top:246px;" width="24" height="24" viewBox="0 0 24 24" fill="none"><path d="M22 2L10.5 13.5M22 2L15 22L10.5 13.5L2 9Z" stroke="#fff" stroke-width="1.9" stroke-linecap="round" stroke-linejoin="round"/></svg>
<div class="t" style="left:1849.20px;top:251.65px;font-size:14px;font-weight:700;color:#fff;letter-spacing:-0.440px;">Vendi</div>
<div style="position:absolute;left:737px;top:335px;width:1166px;height:52px;background:#f8f9fb"></div>
<div style="position:absolute;left:737px;top:387px;width:1166px;height:47px;background:#f8f9fb"></div>
<div style="position:absolute;left:737px;top:533px;width:1166px;height:53px;background:#f8f9fb"></div>
<div style="position:absolute;left:736px;top:292px;width:1168px;height:348px;border:1px solid #dfe3e8;border-radius:8px;box-sizing:border-box"></div>
<div style="position:absolute;left:737px;top:335px;width:1166px;height:1px;background:#dfe3e8"></div>
<div style="position:absolute;left:737px;top:387px;width:1166px;height:1px;background:#dfe3e8"></div>
<div style="position:absolute;left:737px;top:434px;width:1166px;height:1px;background:#dfe3e8"></div>
<div style="position:absolute;left:737px;top:487px;width:1166px;height:1px;background:#dfe3e8"></div>
<div style="position:absolute;left:737px;top:533px;width:1166px;height:1px;background:#dfe3e8"></div>
<div style="position:absolute;left:737px;top:586px;width:1166px;height:1px;background:#dfe3e8"></div>
<div style="position:absolute;left:787px;top:293px;width:1px;height:94px;background:#dfe3e8"></div>
<div style="position:absolute;left:887px;top:293px;width:1px;height:94px;background:#dfe3e8"></div>
<div style="position:absolute;left:1446px;top:293px;width:1px;height:94px;background:#dfe3e8"></div>
<div style="position:absolute;left:1565px;top:293px;width:1px;height:94px;background:#dfe3e8"></div>
<div style="position:absolute;left:1640px;top:293px;width:1px;height:94px;background:#dfe3e8"></div>
<div style="position:absolute;left:1762px;top:293px;width:1px;height:94px;background:#dfe3e8"></div>
<div style="position:absolute;left:1850px;top:293px;width:1px;height:94px;background:#dfe3e8"></div>
<div style="position:absolute;left:787px;top:434px;width:1px;height:53px;background:#dfe3e8"></div>
<div style="position:absolute;left:887px;top:434px;width:1px;height:53px;background:#dfe3e8"></div>
<div style="position:absolute;left:1446px;top:434px;width:1px;height:53px;background:#dfe3e8"></div>
<div style="position:absolute;left:1565px;top:434px;width:1px;height:53px;background:#dfe3e8"></div>
<div style="position:absolute;left:1640px;top:434px;width:1px;height:53px;background:#dfe3e8"></div>
<div style="position:absolute;left:1762px;top:434px;width:1px;height:53px;background:#dfe3e8"></div>
<div style="position:absolute;left:1850px;top:434px;width:1px;height:53px;background:#dfe3e8"></div>
<div style="position:absolute;left:787px;top:533px;width:1px;height:106px;background:#dfe3e8"></div>
<div style="position:absolute;left:887px;top:533px;width:1px;height:106px;background:#dfe3e8"></div>
<div style="position:absolute;left:1446px;top:533px;width:1px;height:106px;background:#dfe3e8"></div>
<div style="position:absolute;left:1565px;top:533px;width:1px;height:106px;background:#dfe3e8"></div>
<div style="position:absolute;left:1640px;top:533px;width:1px;height:106px;background:#dfe3e8"></div>
<div style="position:absolute;left:1762px;top:533px;width:1px;height:106px;background:#dfe3e8"></div>
<div style="position:absolute;left:1850px;top:533px;width:1px;height:106px;background:#dfe3e8"></div>
<div class="t" style="left:800.40px;top:307.35px;font-size:14px;font-weight:700;color:#111318;">Id</div>
<div class="t" style="left:900.80px;top:307.35px;font-size:14px;font-weight:700;color:#111318;">Nome</div>
<div class="t" style="left:1459.60px;top:307.35px;font-size:14px;font-weight:700;color:#111318;letter-spacing:-0.179px;">Prezzo iniziale</div>
<div class="t" style="left:1578.00px;top:307.35px;font-size:14px;font-weight:700;color:#111318;">Qtà</div>
<div class="t" style="left:1653.60px;top:307.35px;font-size:14px;font-weight:700;color:#111318;letter-spacing:-0.172px;">Prezzo vendita</div>
<div class="t" style="left:1774.70px;top:307.35px;font-size:14px;font-weight:700;color:#111318;letter-spacing:-0.060px;">Subtotale</div>
<svg style="position:absolute;left:754px;top:354.0px;" width="18" height="14" viewBox="0 0 28 22" fill="none"><defs><linearGradient id="rg4466f2" gradientUnits="userSpaceOnUse" x1="1" y1="5" x2="27" y2="18"><stop offset="0" stop-color="#4466f2"/><stop offset="1" stop-color="#18a8c4"/></linearGradient></defs>
<g stroke="url(#rg4466f2)" fill="none" stroke-linecap="butt"><path stroke-width="1.75" d="M19.7 15.7A9.9 9.9 0 1 0 14.6 20.3"/>
<path stroke-width="2.3" d="M8.6 15.5V6.8H12.5A2.45 2.45 0 0 1 12.5 11.7H8.6M12.4 12C13.3 17.5 16 19.6 19.5 19.6C21.5 19.6 23 19 24.5 18"/></g><path d="M23.2 16.1L27.8 17.1L25.4 20.6Z" fill="#18a8c4"/></svg>
<div class="t" style="left:800.40px;top:354.85px;font-size:14px;font-weight:400;color:#111318;letter-spacing:-0.384px;">507376</div>
<svg style="position:absolute;left:854px;top:355.0px;" width="15" height="15" viewBox="0 0 15 15" fill="none"><g stroke="#8a9099" stroke-width="1.4" fill="none"><rect x="4.5" y="4.5" width="9" height="9" rx="2"/><path d="M2.5 10.5C1.5 10.5 1 10 1 9V3C1 1.8 1.8 1 3 1H9C10 1 10.5 1.5 10.5 2.5"/></g></svg>
<div class="t" style="left:900.80px;top:354.85px;font-size:14px;font-weight:400;color:#111318;letter-spacing:-0.170px;">Barattolo Plastica Giallo</div>
<div class="t" style="left:1515.61px;top:354.85px;font-size:14px;font-weight:400;color:#111318;letter-spacing:-0.350px;">1,00 €</div>
<div style="position:absolute;left:1578px;top:346.0px;width:50px;height:30px;border:1px solid #cfd5de;border-radius:8px;box-sizing:border-box;background:#fff"></div>
<div class="t" style="left:1589.80px;top:355.70px;font-size:13px;font-weight:400;color:#111318;">1</div>
<div style="position:absolute;left:1653px;top:346.0px;width:97px;height:30px;border:1px solid #cfd5de;border-radius:8px;box-sizing:border-box;background:#fff"></div>
<div class="t" style="left:1663.50px;top:356.54px;font-size:12px;font-weight:400;color:#111318;">0,50 €</div>
<div class="t" style="left:1800.81px;top:354.85px;font-size:14px;font-weight:400;color:#111318;letter-spacing:-0.350px;">0,50 €</div>
<div style="position:absolute;left:1875.2px;top:351.0px;width:3.6px;height:3.6px;border-radius:2px;background:#4f6ef2"></div>
<div style="position:absolute;left:1875.2px;top:358.2px;width:3.6px;height:3.6px;border-radius:2px;background:#4f6ef2"></div>
<div style="position:absolute;left:1875.2px;top:365.4px;width:3.6px;height:3.6px;border-radius:2px;background:#4f6ef2"></div>
<div class="t" style="left:749.20px;top:403.75px;font-size:14px;font-weight:400;color:#111318;letter-spacing:-0.192px;">Provvigione: 0,28 €</div>
<div style="position:absolute;left:876px;top:400px;width:1px;height:22px;background:#dfe3e8"></div>
<div class="t" style="left:887.00px;top:403.75px;font-size:14px;font-weight:400;color:#111318;letter-spacing:-0.241px;">Rimborso: 0,22 €</div>
<div style="position:absolute;left:1000px;top:400px;width:1px;height:22px;background:#dfe3e8"></div>
<div class="t" style="left:1010.90px;top:403.75px;font-size:14px;font-weight:400;color:#111318;letter-spacing:0.021px;">Quantità disponibile: 2</div>
<svg style="position:absolute;left:754px;top:453.5px;" width="18" height="14" viewBox="0 0 28 22" fill="none"><defs><linearGradient id="rg4466f2" gradientUnits="userSpaceOnUse" x1="1" y1="5" x2="27" y2="18"><stop offset="0" stop-color="#4466f2"/><stop offset="1" stop-color="#18a8c4"/></linearGradient></defs>
<g stroke="url(#rg4466f2)" fill="none" stroke-linecap="butt"><path stroke-width="1.75" d="M19.7 15.7A9.9 9.9 0 1 0 14.6 20.3"/>
<path stroke-width="2.3" d="M8.6 15.5V6.8H12.5A2.45 2.45 0 0 1 12.5 11.7H8.6M12.4 12C13.3 17.5 16 19.6 19.5 19.6C21.5 19.6 23 19 24.5 18"/></g><path d="M23.2 16.1L27.8 17.1L25.4 20.6Z" fill="#18a8c4"/></svg>
<div class="t" style="left:800.40px;top:454.35px;font-size:14px;font-weight:400;color:#111318;letter-spacing:-0.384px;">507439</div>
<svg style="position:absolute;left:854px;top:454.5px;" width="15" height="15" viewBox="0 0 15 15" fill="none"><g stroke="#8a9099" stroke-width="1.4" fill="none"><rect x="4.5" y="4.5" width="9" height="9" rx="2"/><path d="M2.5 10.5C1.5 10.5 1 10 1 9V3C1 1.8 1.8 1 3 1H9C10 1 10.5 1.5 10.5 2.5"/></g></svg>
<div class="t" style="left:900.80px;top:454.35px;font-size:14px;font-weight:400;color:#111318;letter-spacing:-0.170px;">Decorazione Babbo Natale Grigio</div>
<div class="t" style="left:1515.61px;top:454.35px;font-size:14px;font-weight:400;color:#111318;letter-spacing:-0.350px;">5,60 €</div>
<div style="position:absolute;left:1578px;top:445.5px;width:50px;height:30px;border:1px solid #cfd5de;border-radius:8px;box-sizing:border-box;background:#fff"></div>
<div class="t" style="left:1589.80px;top:455.20px;font-size:13px;font-weight:400;color:#111318;">1</div>
<div style="position:absolute;left:1653px;top:445.5px;width:97px;height:30px;border:1px solid #cfd5de;border-radius:8px;box-sizing:border-box;background:#fff"></div>
<div class="t" style="left:1663.50px;top:456.04px;font-size:12px;font-weight:400;color:#111318;">2,80 €</div>
<div class="t" style="left:1800.81px;top:454.35px;font-size:14px;font-weight:400;color:#111318;letter-spacing:-0.350px;">2,80 €</div>
<div style="position:absolute;left:1875.2px;top:450.5px;width:3.6px;height:3.6px;border-radius:2px;background:#4f6ef2"></div>
<div style="position:absolute;left:1875.2px;top:457.7px;width:3.6px;height:3.6px;border-radius:2px;background:#4f6ef2"></div>
<div style="position:absolute;left:1875.2px;top:464.9px;width:3.6px;height:3.6px;border-radius:2px;background:#4f6ef2"></div>
<div class="t" style="left:749.20px;top:503.75px;font-size:14px;font-weight:400;color:#111318;letter-spacing:-0.192px;">Provvigione: 1,55 €</div>
<div style="position:absolute;left:876px;top:500px;width:1px;height:22px;background:#dfe3e8"></div>
<div class="t" style="left:887.00px;top:503.75px;font-size:14px;font-weight:400;color:#111318;letter-spacing:-0.241px;">Rimborso: 1,25 €</div>
<div style="position:absolute;left:1000px;top:500px;width:1px;height:22px;background:#dfe3e8"></div>
<div class="t" style="left:1010.90px;top:503.75px;font-size:14px;font-weight:400;color:#111318;letter-spacing:0.021px;">Quantità disponibile: 0</div>
<svg style="position:absolute;left:754px;top:552.5px;" width="18" height="14" viewBox="0 0 28 22" fill="none"><defs><linearGradient id="rg4466f2" gradientUnits="userSpaceOnUse" x1="1" y1="5" x2="27" y2="18"><stop offset="0" stop-color="#4466f2"/><stop offset="1" stop-color="#18a8c4"/></linearGradient></defs>
<g stroke="url(#rg4466f2)" fill="none" stroke-linecap="butt"><path stroke-width="1.75" d="M19.7 15.7A9.9 9.9 0 1 0 14.6 20.3"/>
<path stroke-width="2.3" d="M8.6 15.5V6.8H12.5A2.45 2.45 0 0 1 12.5 11.7H8.6M12.4 12C13.3 17.5 16 19.6 19.5 19.6C21.5 19.6 23 19 24.5 18"/></g><path d="M23.2 16.1L27.8 17.1L25.4 20.6Z" fill="#18a8c4"/></svg>
<div class="t" style="left:800.40px;top:553.35px;font-size:14px;font-weight:400;color:#111318;letter-spacing:-0.384px;">507442</div>
<svg style="position:absolute;left:854px;top:553.5px;" width="15" height="15" viewBox="0 0 15 15" fill="none"><g stroke="#8a9099" stroke-width="1.4" fill="none"><rect x="4.5" y="4.5" width="9" height="9" rx="2"/><path d="M2.5 10.5C1.5 10.5 1 10 1 9V3C1 1.8 1.8 1 3 1H9C10 1 10.5 1.5 10.5 2.5"/></g></svg>
<div class="t" style="left:900.80px;top:553.35px;font-size:14px;font-weight:400;color:#111318;letter-spacing:-0.170px;">Sacchetto 3 Ghirlandine</div>
<div class="t" style="left:1515.61px;top:553.35px;font-size:14px;font-weight:400;color:#111318;letter-spacing:-0.350px;">2,40 €</div>
<div style="position:absolute;left:1578px;top:544.5px;width:50px;height:30px;border:1px solid #cfd5de;border-radius:8px;box-sizing:border-box;background:#fff"></div>
<div class="t" style="left:1589.80px;top:554.20px;font-size:13px;font-weight:400;color:#111318;">1</div>
<div style="position:absolute;left:1653px;top:544.5px;width:97px;height:30px;border:1px solid #cfd5de;border-radius:8px;box-sizing:border-box;background:#fff"></div>
<div class="t" style="left:1663.50px;top:555.04px;font-size:12px;font-weight:400;color:#111318;">1,70 €</div>
<div class="t" style="left:1800.81px;top:553.35px;font-size:14px;font-weight:400;color:#111318;letter-spacing:-0.350px;">1,70 €</div>
<div style="position:absolute;left:1875.2px;top:549.5px;width:3.6px;height:3.6px;border-radius:2px;background:#4f6ef2"></div>
<div style="position:absolute;left:1875.2px;top:556.7px;width:3.6px;height:3.6px;border-radius:2px;background:#4f6ef2"></div>
<div style="position:absolute;left:1875.2px;top:563.9px;width:3.6px;height:3.6px;border-radius:2px;background:#4f6ef2"></div>
<svg style="position:absolute;left:754px;top:605.5px;" width="18" height="14" viewBox="0 0 28 22" fill="none"><defs><linearGradient id="rg4466f2" gradientUnits="userSpaceOnUse" x1="1" y1="5" x2="27" y2="18"><stop offset="0" stop-color="#4466f2"/><stop offset="1" stop-color="#18a8c4"/></linearGradient></defs>
<g stroke="url(#rg4466f2)" fill="none" stroke-linecap="butt"><path stroke-width="1.75" d="M19.7 15.7A9.9 9.9 0 1 0 14.6 20.3"/>
<path stroke-width="2.3" d="M8.6 15.5V6.8H12.5A2.45 2.45 0 0 1 12.5 11.7H8.6M12.4 12C13.3 17.5 16 19.6 19.5 19.6C21.5 19.6 23 19 24.5 18"/></g><path d="M23.2 16.1L27.8 17.1L25.4 20.6Z" fill="#18a8c4"/></svg>
<div class="t" style="left:800.40px;top:606.35px;font-size:14px;font-weight:400;color:#111318;letter-spacing:-0.384px;">507519</div>
<svg style="position:absolute;left:854px;top:606.5px;" width="15" height="15" viewBox="0 0 15 15" fill="none"><g stroke="#8a9099" stroke-width="1.4" fill="none"><rect x="4.5" y="4.5" width="9" height="9" rx="2"/><path d="M2.5 10.5C1.5 10.5 1 10 1 9V3C1 1.8 1.8 1 3 1H9C10 1 10.5 1.5 10.5 2.5"/></g></svg>
<div class="t" style="left:900.80px;top:606.35px;font-size:14px;font-weight:400;color:#111318;letter-spacing:-0.170px;">Asda</div>
<div class="t" style="left:1508.18px;top:606.35px;font-size:14px;font-weight:400;color:#111318;letter-spacing:-0.350px;">55,50 €</div>
<div style="position:absolute;left:1578px;top:597.5px;width:50px;height:30px;border:1px solid #cfd5de;border-radius:8px;box-sizing:border-box;background:#fff"></div>
<div class="t" style="left:1589.80px;top:607.20px;font-size:13px;font-weight:400;color:#111318;">1</div>
<div style="position:absolute;left:1653px;top:597.5px;width:97px;height:30px;border:1px solid #cfd5de;border-radius:8px;box-sizing:border-box;background:#fff"></div>
<div class="t" style="left:1663.50px;top:608.04px;font-size:12px;font-weight:400;color:#111318;">55,50 €</div>
<div class="t" style="left:1793.38px;top:606.35px;font-size:14px;font-weight:400;color:#111318;letter-spacing:-0.350px;">55,50 €</div>
<div style="position:absolute;left:1875.2px;top:602.5px;width:3.6px;height:3.6px;border-radius:2px;background:#4f6ef2"></div>
<div style="position:absolute;left:1875.2px;top:609.7px;width:3.6px;height:3.6px;border-radius:2px;background:#4f6ef2"></div>
<div style="position:absolute;left:1875.2px;top:616.9px;width:3.6px;height:3.6px;border-radius:2px;background:#4f6ef2"></div>
<div style="position:absolute;left:736px;top:736px;width:1168px;height:1px;background:#e3e6eb"></div>
<div style="position:absolute;left:736px;top:749px;width:131px;height:36px;background:#4f6ef2;border-radius:8px"></div>
<div class="t" style="left:755.00px;top:760.65px;font-size:14px;font-weight:700;color:#fff;letter-spacing:-0.352px;">Applica buono</div>
<div style="position:absolute;left:883px;top:749px;width:1px;height:36px;background:#e3e6eb"></div>
<svg style="position:absolute;left:906px;top:757px;" width="24" height="20" viewBox="0 0 24 20" fill="none"><g stroke="#4f6ef2" stroke-width="1.8" stroke-linecap="round" stroke-linejoin="round"><path d="M3 18V14.5L13.5 4A2.1 2.1 0 0 1 16.5 7L6 17.5H3Z M16 18H21"/></g></svg>
<div class="t" style="left:950.00px;top:760.65px;font-size:14px;font-weight:400;color:#111318;letter-spacing:-0.355px;font-style:italic;">Nessuna nota</div>
<div style="position:absolute;left:736px;top:797px;width:1168px;height:1px;background:#e3e6eb"></div>
<div class="t" style="left:736.00px;top:814.71px;font-size:16px;font-weight:400;-webkit-text-stroke:0.40px #4f6ef2;color:#4f6ef2;letter-spacing:0.159px;">Totale</div>
<div class="t" style="left:896.25px;top:814.71px;font-size:16px;font-weight:400;-webkit-text-stroke:0.40px #4f6ef2;color:#4f6ef2;letter-spacing:0.288px;">Quantità</div>
<div class="t" style="left:963.75px;top:814.71px;font-size:16px;font-weight:700;color:#111318;">4</div>
<div class="t" style="left:736.00px;top:856.50px;font-size:28px;font-weight:700;color:#050505;letter-spacing:0.263px;">60,50 €</div>
<div style="position:absolute;left:896px;top:847px;width:220px;height:36px;border:1px solid #cfd5de;border-radius:8px;box-sizing:border-box"></div>
<svg style="position:absolute;left:903px;top:855px;" width="22" height="20" viewBox="0 0 22 20" fill="none"><g stroke="#2e8ae6" stroke-width="1.9" stroke-linecap="round"><rect x="1.5" y="2.5" width="19" height="15" rx="2.5"/><path d="M1.5 7.5H20.5M5.5 13H7M9.5 13H11"/></g></svg>
<div class="t" style="left:931.25px;top:859.00px;font-size:13px;font-weight:400;color:#111318;letter-spacing:-1.234px;">POS</div>
<svg style="position:absolute;left:1093px;top:858px;" width="10" height="15" viewBox="0 0 10 15" fill="none"><path d="M2 5L5 2L8 5M2 10L5 13L8 10" stroke="#6b7280" stroke-width="1.3" stroke-linecap="round" stroke-linejoin="round"/></svg>
<div style="position:absolute;left:1755px;top:814.5px;width:149px;height:35px;border:1px solid #4f6ef2;border-radius:8px;box-sizing:border-box"></div>
<div class="t" style="left:1774.00px;top:825.15px;font-size:14px;font-weight:400;-webkit-text-stroke:0.40px #4f6ef2;color:#4f6ef2;letter-spacing:0.135px;-webkit-text-stroke:0.5px #4f6ef2;">Restituisci articoli</div>
<div style="position:absolute;left:1547px;top:862px;width:127px;height:36px;border:1px solid #4f6ef2;border-radius:8px;box-sizing:border-box"></div>
<svg style="position:absolute;left:1561px;top:869px;" width="22" height="22" viewBox="0 0 22 22" fill="none"><g stroke="#4f6ef2" stroke-width="1.9" stroke-linecap="round" stroke-linejoin="round"><path d="M10 17H3.5A1.5 1.5 0 0 1 2 15.5V4.5A1.5 1.5 0 0 1 3.5 3H18.5A1.5 1.5 0 0 1 20 4.5V12M2 5L11 11L20 5M14 18H20M17.5 15.5L20 18L17.5 20.5"/></g></svg>
<div class="t" style="left:1594.00px;top:873.35px;font-size:14px;font-weight:400;-webkit-text-stroke:0.40px #4f6ef2;color:#4f6ef2;letter-spacing:0.240px;-webkit-text-stroke:0.5px #4f6ef2;">Invia mail</div>
<div style="position:absolute;left:1690px;top:862px;width:114px;height:36px;border:1px solid #4f6ef2;border-radius:8px;box-sizing:border-box"></div>
<svg style="position:absolute;left:1704px;top:869px;" width="22" height="22" viewBox="0 0 22 22" fill="none"><g stroke="#4f6ef2" stroke-width="1.9" stroke-linecap="round" stroke-linejoin="round"><path d="M6 16H4A2 2 0 0 1 2 14V10A2 2 0 0 1 4 8H18A2 2 0 0 1 20 10V14A2 2 0 0 1 18 16H16M6 8V3.5A1.5 1.5 0 0 1 7.5 2H14.5A1.5 1.5 0 0 1 16 3.5V8M7.5 13H14.5A1.5 1.5 0 0 1 16 14.5V18.5A1.5 1.5 0 0 1 14.5 20H7.5A1.5 1.5 0 0 1 6 18.5V14.5A1.5 1.5 0 0 1 7.5 13Z"/></g></svg>
<div class="t" style="left:1737.40px;top:873.35px;font-size:14px;font-weight:400;-webkit-text-stroke:0.40px #4f6ef2;color:#4f6ef2;letter-spacing:-0.250px;-webkit-text-stroke:0.5px #4f6ef2;">Stampa</div>
<div style="position:absolute;left:1820px;top:862px;width:84px;height:36px;border:1px solid #f05252;border-radius:8px;box-sizing:border-box"></div>
<div class="t" style="left:1839.00px;top:873.35px;font-size:14px;font-weight:400;-webkit-text-stroke:0.40px #ef4444;color:#ef4444;letter-spacing:-0.051px;-webkit-text-stroke:0.5px #ef4444;">Elimina</div>
</body></html>
